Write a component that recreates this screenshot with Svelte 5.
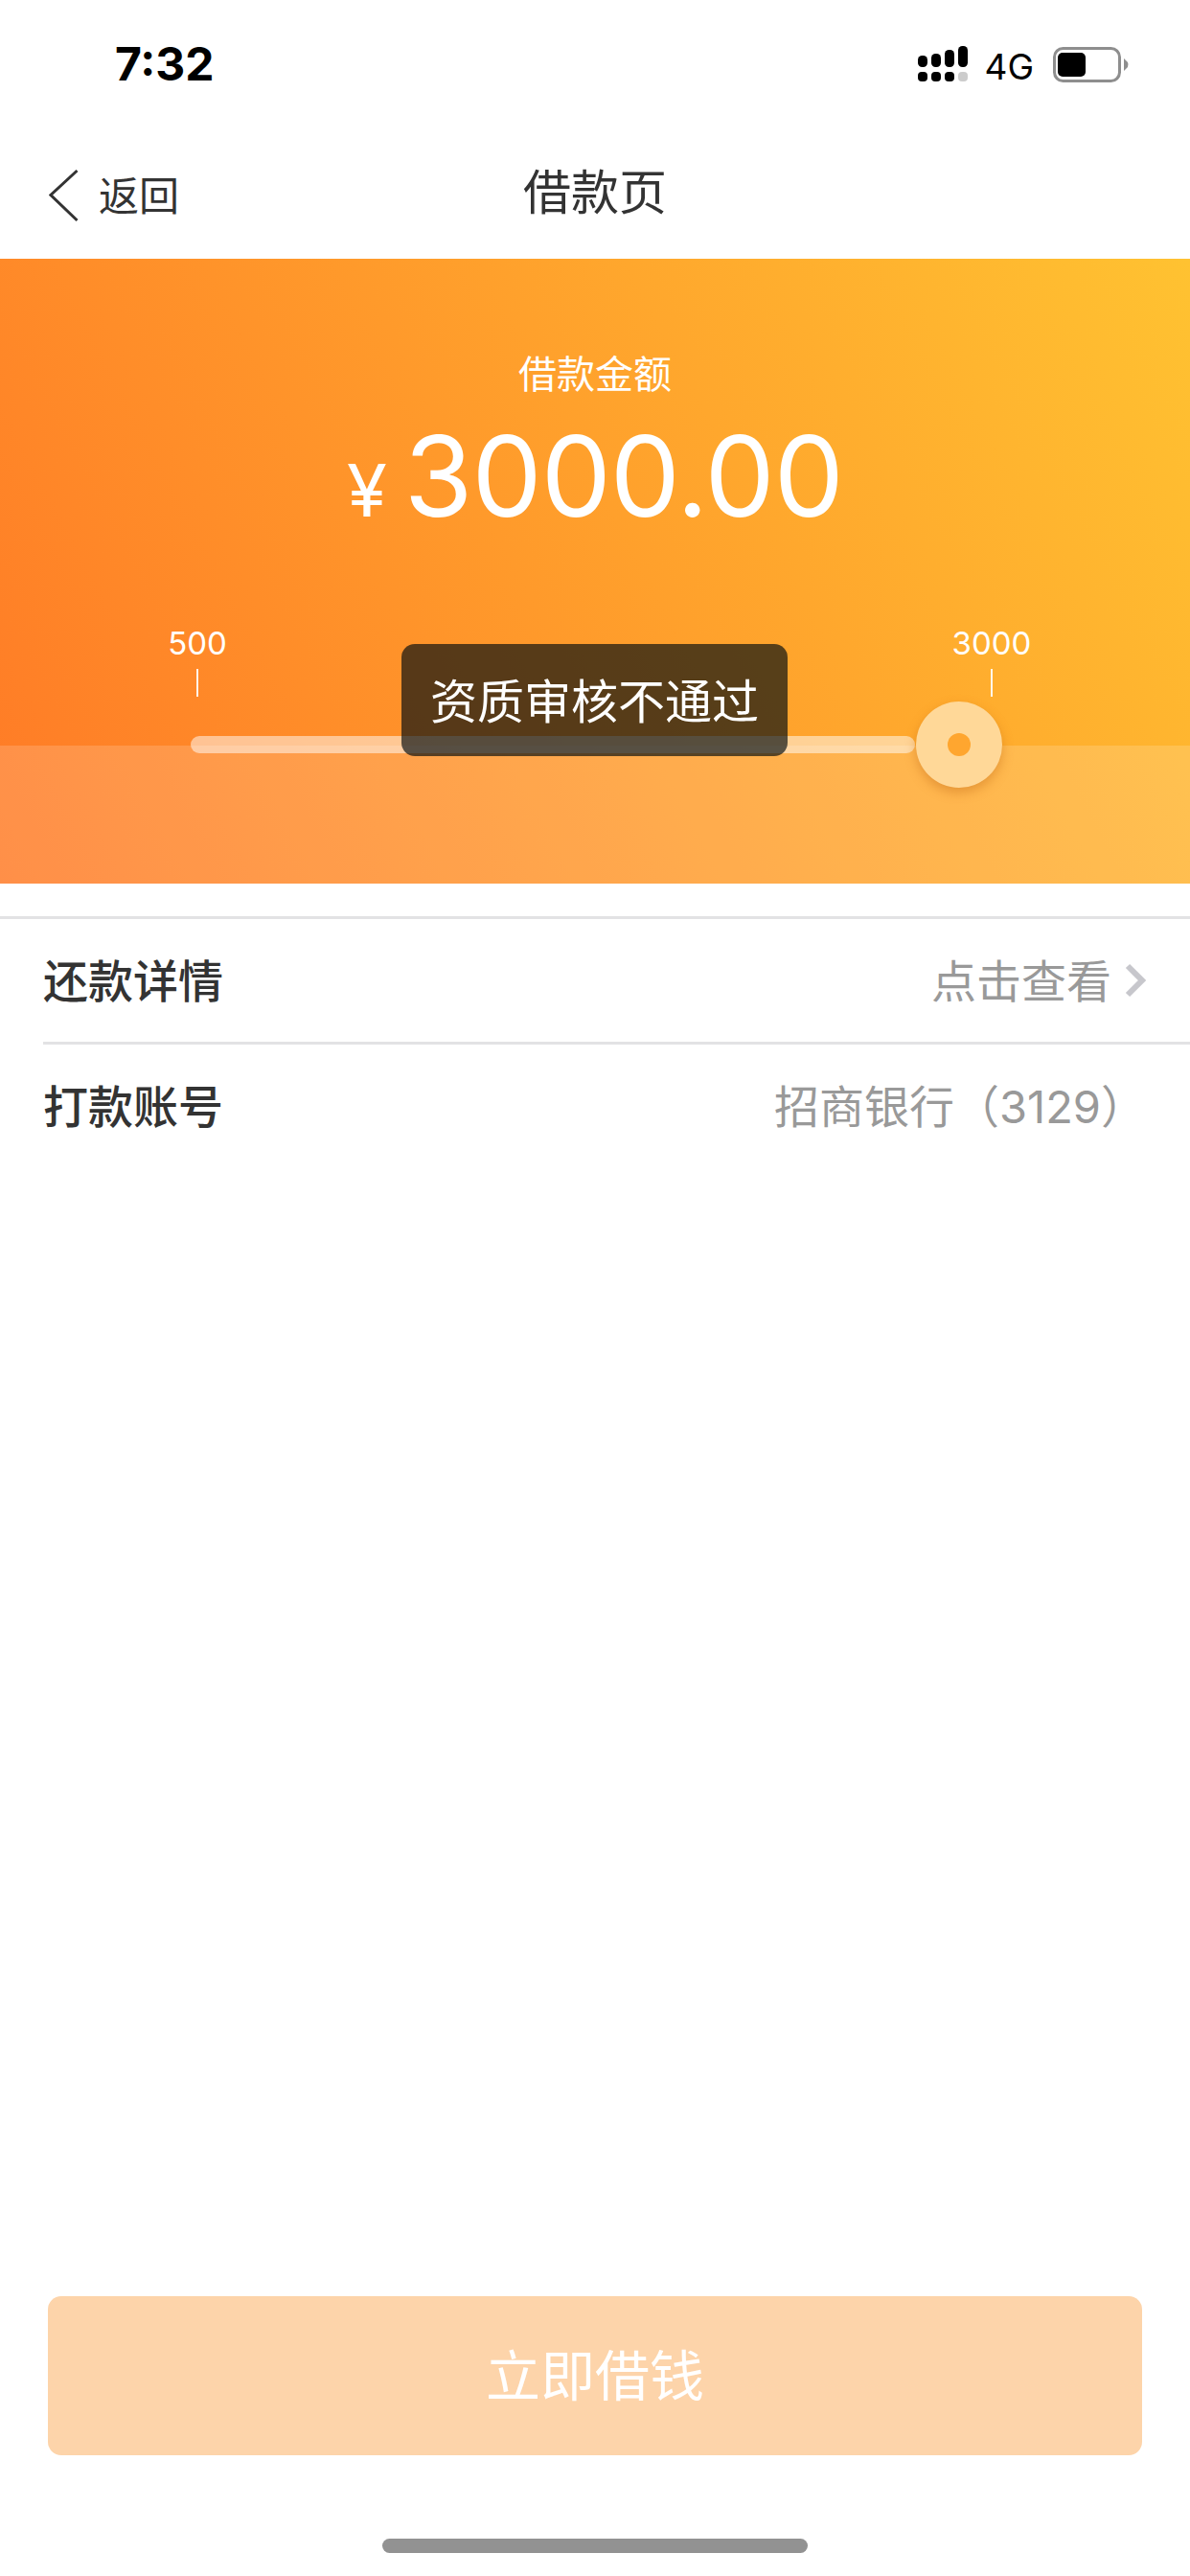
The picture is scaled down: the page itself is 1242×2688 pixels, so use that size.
<script>
  let amount = $state('3000.00');
  const rows = [
    { label: '还款详情', value: '点击查看', link: true },
    { label: '打款账号', value: '招商银行（3129）', link: false },
  ];
  const signal = [
    { x: 958, top: 58 },
    { x: 972, top: 56 },
    { x: 986, top: 52 },
    { x: 1000, top: 48 },
  ];
</script>

<div class="page">
  <div class="status">
    <span class="time">7:32</span>
    <div class="status-right">
      <svg class="signal" width="52" height="38" viewBox="958 48 52 38">
        {#each signal as s, i}
          <rect x={s.x} y={s.top} width="10" height={70 - s.top} rx="4.5" fill="#000" />
          <rect x={s.x} y="75" width="10" height="10" rx="4" fill={i === 3 ? '#ccc' : '#000'} />
        {/each}
      </svg>
      <span class="net">4G</span>
      <svg class="battery" width="80" height="38" viewBox="1099 49 80 38">
        <rect x="1100.5" y="50.5" width="68" height="34" rx="9" fill="none" stroke="#8e8e8e" stroke-width="3" />
        <rect x="1104" y="55" width="29" height="25" rx="5" fill="#000" />
        <path d="M1173 61 L1177 65 Q1178 67 1177 70 L1173 74 Z" fill="#8e8e8e" />
      </svg>
    </div>
  </div>

  <div class="nav">
    <button class="back">
      <svg width="31" height="56" viewBox="0 0 31 56">
        <path d="M29.5 2 L2 27.5 L29.5 54" fill="none" stroke="#333" stroke-width="3" />
      </svg>
      <span>返回</span>
    </button>
    <span class="title">借款页</span>
  </div>

  <div class="hero">
    <div class="band"></div>
    <div class="hero-label">借款金额</div>
    <div class="amount"><span class="yen">¥</span><span class="num">{amount}</span></div>
    <div class="scale">
      <div class="mark"><span>500</span><i></i></div>
      <div class="mark"><span>3000</span><i></i></div>
    </div>
    <div class="slider">
      <div class="track"></div>
      <div class="thumb"><div class="dot"></div></div>
    </div>
    <div class="toast"><span>资质审核不通过</span></div>
  </div>

  <div class="list">
    {#each rows as row}
      <div class="row">
        <span class="row-label">{row.label}</span>
        <span class="row-value" class:plain={!row.link}>{row.value}</span>
        {#if row.link}
          <svg class="chev" width="24" height="36" viewBox="0 0 24 36">
            <path d="M4 3 L19 18 L4 33" fill="none" stroke="#c7c7cc" stroke-width="6" />
          </svg>
        {/if}
      </div>
    {/each}
  </div>

  <div class="footer">
    <button class="cta"><span>立即借钱</span></button>
    <div class="home"></div>
  </div>
</div>

<style>
  :global(body) {
    margin: 0;
    background: #fff;
  }

  .page {
    width: 1242px;
    height: 2688px;
    display: flex;
    flex-direction: column;
    overflow: hidden;
    font-family: Inter, "Noto Sans CJK SC", sans-serif;
    color: #333;
  }

  button {
    font-family: inherit;
    border: none;
    background: transparent;
    padding: 0;
  }

  .status {
    height: 135px;
    flex-shrink: 0;
    display: flex;
    align-items: flex-start;
    justify-content: space-between;
    box-sizing: border-box;
    padding: 0 63px 0 120px;
  }

  .time {
    margin-top: 38px;
    font-size: 48px;
    line-height: 58px;
    font-weight: 700;
    color: #000;
  }

  .status-right {
    display: flex;
    align-items: flex-start;
    margin-top: 48px;
  }

  .signal { display: block; }
  .battery { display: block; margin-top: 1px; }

  .net {
    margin-left: 17px;
    margin-right: 20px;
    font-size: 37px;
    line-height: 44px;
    color: #000;
  }

  .nav {
    position: relative;
    height: 135px;
    flex-shrink: 0;
    display: flex;
    align-items: center;
    justify-content: center;
  }

  .back {
    position: absolute;
    left: 51px;
    top: 40px;
    display: flex;
    align-items: center;
    gap: 21px;
    color: #333;
    font-size: 42px;
    line-height: 56px;
  }

  .back svg { display: block; }
  .back span { margin-top: 2px; }

  .title {
    font-size: 50px;
    line-height: 70px;
    margin-bottom: 3px;
    color: #333;
  }

  .hero {
    position: relative;
    height: 652px;
    flex-shrink: 0;
    display: flex;
    flex-direction: column;
    box-sizing: border-box;
    padding-top: 93px;
    color: #fff;
    background: linear-gradient(62deg, #ff7a26 0%, #ff9a2b 45%, #ffc231 100%);
  }

  .band {
    position: absolute;
    left: 0;
    right: 0;
    bottom: 0;
    height: 144px;
    background: rgba(255, 255, 255, 0.16);
  }

  .hero-label {
    text-align: center;
    font-size: 40px;
    line-height: 56px;
  }

  .amount {
    display: flex;
    align-items: baseline;
    justify-content: center;
    height: 140px;
    margin-top: 8px;
  }

  .yen {
    font-size: 76px;
    line-height: 140px;
    margin-right: 18px;
  }

  .num {
    font-size: 116px;
    line-height: 140px;
    font-weight: 400;
    letter-spacing: -1px;
  }

  .scale {
    position: relative;
    display: flex;
    justify-content: space-between;
    padding: 0 157px 0 156px;
    margin-top: 82px;
  }

  .mark {
    width: 100px;
    display: flex;
    flex-direction: column;
    align-items: center;
    font-size: 33px;
    line-height: 44px;
  }

  .mark i {
    display: block;
    width: 2px;
    height: 29px;
    margin-top: 5px;
    background: rgba(255, 255, 255, 0.9);
  }

  .slider {
    position: relative;
    display: flex;
    align-items: center;
    padding-left: 199px;
    margin-top: 5px;
  }

  .track {
    width: 756px;
    height: 18px;
    border-radius: 9px;
    background: rgba(255, 255, 255, 0.5);
  }

  .thumb {
    width: 90px;
    height: 90px;
    margin-left: 1px;
    border-radius: 50%;
    display: flex;
    align-items: center;
    justify-content: center;
    background: #ffd898;
    box-shadow: 0 5px 12px rgba(190, 100, 20, 0.4);
  }

  .dot {
    width: 24px;
    height: 24px;
    border-radius: 50%;
    background: #ffa62f;
  }

  .toast {
    position: absolute;
    left: 419px;
    top: 402px;
    width: 403px;
    height: 117px;
    display: flex;
    align-items: center;
    justify-content: center;
    border-radius: 14px;
    background: rgba(0, 10, 15, 0.66);
    font-size: 49px;
  }

  .toast span { margin-top: -5px; }

  .list {
    margin-top: 34px;
    border-top: 3px solid #e2e2e4;
  }

  .row {
    height: 128px;
    display: flex;
    align-items: center;
    margin-left: 45px;
    padding-right: 45px;
    gap: 13px;
  }

  .row + .row {
    border-top: 3px solid #e2e2e4;
  }

  .row-label {
    margin-right: auto;
    margin-top: -5px;
    font-size: 47px;
    font-weight: 500;
    color: #333;
  }

  .row-value {
    margin-top: -5px;
    font-size: 47px;
    color: #999;
  }

  .row-value.plain {
    margin-right: 1px;
  }

  .chev { display: block; flex-shrink: 0; }

  .footer {
    margin-top: auto;
    display: flex;
    flex-direction: column;
    align-items: center;
    padding-bottom: 24px;
  }

  .cta {
    width: 1142px;
    height: 166px;
    border-radius: 14px;
    background: #fdd4aa;
    color: #fff;
    font-size: 57px;
  }

  .cta span { position: relative; top: -4px; }

  .home {
    width: 444px;
    height: 15px;
    margin-top: 87px;
    border-radius: 8px;
    background: #929292;
  }
</style>
